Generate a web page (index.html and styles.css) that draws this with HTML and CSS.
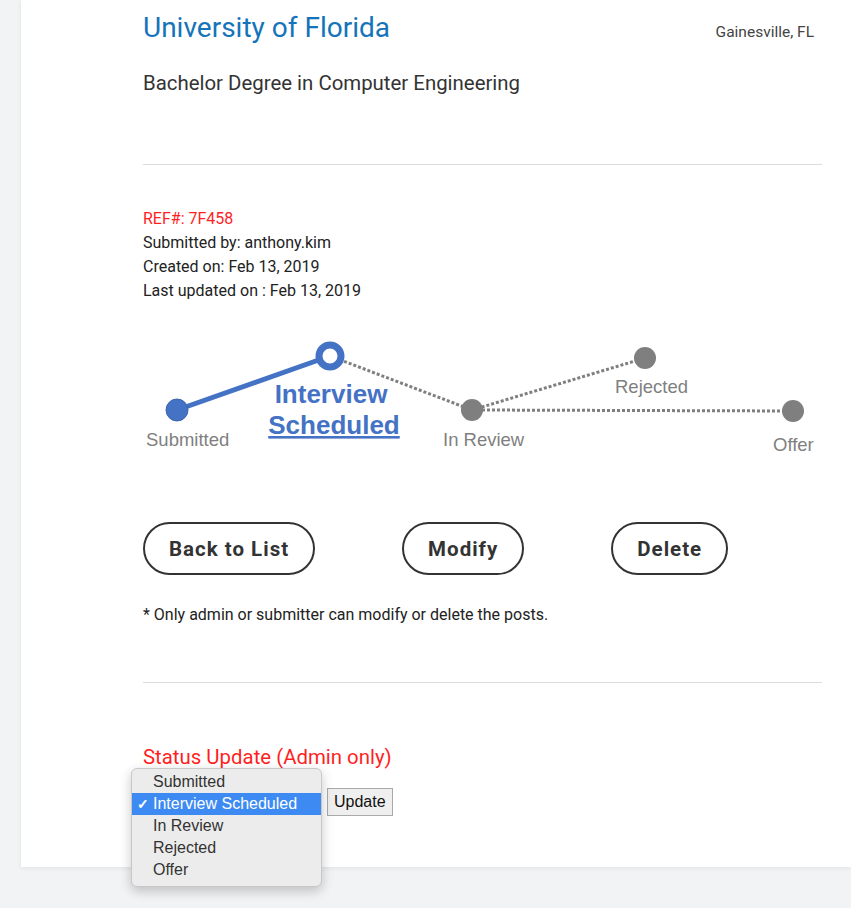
FILE: index.html
```html
<!DOCTYPE html>
<html lang="en">
<head>
<meta charset="utf-8">
<title>Application Detail</title>
<link rel="stylesheet" href="styles.css">
</head>
<body>
<div class="card">
  <div class="header">
    <h1 class="school">University of Florida</h1>
    <span class="location">Gainesville, FL</span>
  </div>
  <p class="degree">Bachelor Degree in Computer Engineering</p>
  <hr class="rule rule-top">
  <div class="meta">
    <div class="ref">REF#: 7F458</div>
    <div>Submitted by: anthony.kim</div>
    <div>Created on: Feb 13, 2019</div>
    <div>Last updated on : Feb 13, 2019</div>
  </div>
  <svg class="flow" width="679" height="140" viewBox="0 0 679 140" xmlns="http://www.w3.org/2000/svg">
    <g stroke="#7f7f7f" stroke-width="3" stroke-dasharray="3 2" fill="none">
      <line x1="187" y1="26" x2="329" y2="80"/>
      <line x1="329" y1="80" x2="502" y2="28"/>
      <line x1="329" y1="80" x2="650" y2="81"/>
    </g>
    <line x1="34" y1="80" x2="187" y2="26" stroke="#4472c4" stroke-width="5"/>
    <circle cx="34" cy="80" r="11" fill="#4472c4" stroke="#3f66ad" stroke-width="1"/>
    <circle cx="187" cy="26" r="11" fill="#fff" stroke="#4472c4" stroke-width="7"/>
    <circle cx="329" cy="80" r="11" fill="#7f7f7f"/>
    <circle cx="502" cy="28" r="11" fill="#7f7f7f"/>
    <circle cx="650" cy="81" r="11" fill="#7f7f7f"/>
    <g class="flow-label">
      <text x="3" y="116">Submitted</text>
      <text x="300" y="116">In Review</text>
      <text x="472" y="63">Rejected</text>
      <text x="630" y="121">Offer</text>
    </g>
    <g class="flow-current">
      <text x="188" y="73" text-anchor="middle">Interview</text>
      <text x="191" y="104" text-anchor="middle" text-decoration="underline">Scheduled</text>
    </g>
  </svg>
  <div class="actions">
    <button class="pill">Back to List</button>
    <button class="pill">Modify</button>
    <button class="pill">Delete</button>
  </div>
  <p class="note">* Only admin or submitter can modify or delete the posts.</p>
  <hr class="rule rule-bottom">
  <h2 class="status-title">Status Update (Admin only)</h2>
  <div class="status-row">
    <div class="select-wrap">
      <div class="select-closed"></div>
      <ul class="dropdown">
        <li>Submitted</li>
        <li class="selected">Interview Scheduled</li>
        <li>In Review</li>
        <li>Rejected</li>
        <li>Offer</li>
      </ul>
    </div>
    <button class="update">Update</button>
  </div>
</div>
</body>
</html>
```

FILE: styles.css
```css
html, body {
  margin: 0;
  padding: 0;
}
body {
  background: #f2f3f5;
  font-family: Roboto, "Liberation Sans", sans-serif;
  color: #222;
  min-height: 908px;
}
.card {
  margin-left: 21px;
  background: #fff;
  padding: 11px 29px 51px 122px;
  box-shadow: 0 1px 5px rgba(0, 0, 0, 0.08);
}
.header {
  display: flex;
  justify-content: space-between;
  align-items: baseline;
}
.school {
  margin: 0;
  font-size: 28px;
  line-height: 34px;
  font-weight: 400;
  color: #1574b9;
}
.location {
  font-size: 15.5px;
  color: #444;
  padding-right: 8px;
}
.degree {
  margin: 26px 0 0;
  font-size: 20.4px;
  line-height: 24px;
  color: #333;
}
.rule {
  border: 0;
  border-top: 1px solid #dcdcdc;
  margin: 0;
  height: 0;
}
.rule-top {
  margin-top: 69px;
}
.meta {
  margin-top: 42px;
  font-size: 16px;
  line-height: 24px;
  color: #222;
}
.ref {
  color: #ff1f1f;
}
.flow {
  display: block;
  margin-top: 27px;
}
.flow-label text {
  font-family: "Liberation Sans", Arial, sans-serif;
  font-size: 18.5px;
  fill: #7f7f7f;
}
.flow-current text {
  font-family: "Liberation Sans", Arial, sans-serif;
  font-size: 26px;
  font-weight: 700;
  fill: #4472c4;
}
.actions {
  display: flex;
  gap: 87px;
  margin-top: 52px;
}
.pill {
  height: 53px;
  padding: 0 24px;
  border: 2px solid #333;
  border-radius: 27px;
  background: #fff;
  font-family: Roboto, "Liberation Sans", sans-serif;
  font-size: 20.5px;
  font-weight: 700;
  letter-spacing: 1px;
  color: #333;
}
.note {
  margin: 30px 0 0;
  font-size: 16px;
  line-height: 20px;
  color: #222;
}
.rule-bottom {
  margin-top: 57px;
}
.status-title {
  margin: 62px 0 0;
  font-size: 20.4px;
  line-height: 24px;
  font-weight: 400;
  color: #ff1f1f;
}
.status-row {
  display: flex;
  align-items: center;
  gap: 4px;
  margin-top: 19px;
  height: 28px;
}
.select-wrap {
  position: relative;
  width: 180px;
  height: 28px;
}
.select-closed {
  height: 100%;
}
.dropdown {
  position: absolute;
  left: -12px;
  top: -20px;
  width: 189px;
  margin: 0;
  padding: 2px 0 5px;
  list-style: none;
  background: #ececec;
  border: 1px solid #c8c8c8;
  border-radius: 6px;
  box-shadow: 0 4px 12px rgba(0, 0, 0, 0.22);
  font-family: "Liberation Sans", Arial, sans-serif;
  font-size: 16px;
  color: #333;
  z-index: 2;
}
.dropdown li {
  height: 22px;
  line-height: 22px;
  padding-left: 21px;
  position: relative;
}
.dropdown .selected {
  background: #3d8bf2;
  color: #fff;
}
.dropdown .selected::before {
  content: "\2713";
  position: absolute;
  left: 5px;
  top: 0;
  font-size: 14px;
  font-weight: 700;
}
.update {
  height: 28px;
  padding: 0 6px;
  border: 1px solid #a9a9a9;
  border-radius: 0;
  background: #efefef;
  font-family: "Liberation Sans", Arial, sans-serif;
  font-size: 16px;
  color: #111;
}
```
